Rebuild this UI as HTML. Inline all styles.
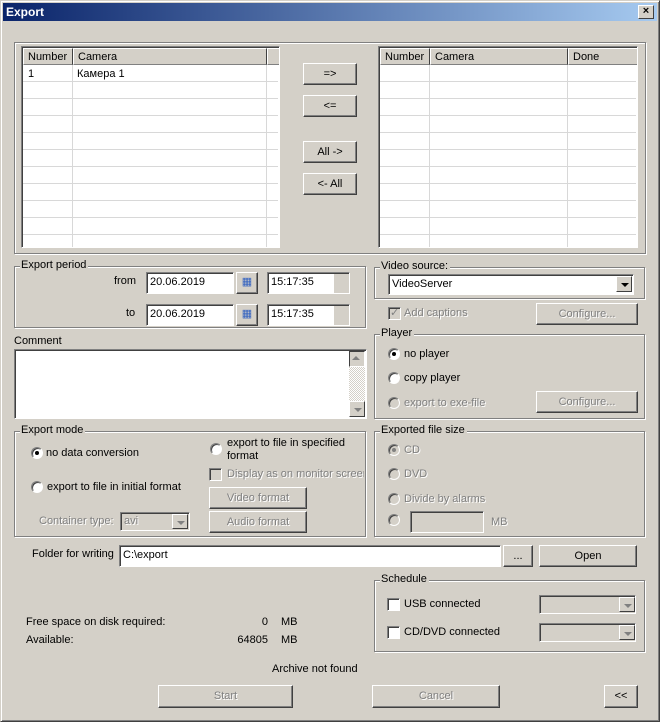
<!DOCTYPE html><html><head><meta charset="utf-8"><style>
*{box-sizing:border-box}
body{margin:0;width:660px;height:722px;background:#d4d0c8;font:11px "Liberation Sans",sans-serif;color:#000;position:relative;overflow:hidden}
.a{position:absolute}
.win{position:absolute;left:0;top:0;width:660px;height:722px;border:1px solid;border-color:#d4d0c8 #404040 #404040 #d4d0c8;box-shadow:inset 1px 1px #fff,inset -1px -1px #808080}
.title{left:3px;top:3px;width:654px;height:18px;background:linear-gradient(90deg,#0a246a,#a6caf0);color:#fff;font-weight:bold;font-size:12px;padding:2px 3px}
.close{left:638px;top:5px;width:16px;height:14px;background:#d4d0c8;border:1px solid;border-color:#fff #404040 #404040 #fff;text-align:center;font-size:11px;line-height:11px;font-weight:bold}
.grp{position:absolute;border:1px solid #808080;box-shadow:1px 1px #fff,inset 1px 1px #fff}
.grp>.l{position:absolute;left:5px;top:-8px;background:#d4d0c8;padding:0 2px 0 1px}
.btn{position:absolute;background:#d4d0c8;border:1px solid;border-color:#fff #404040 #404040 #fff;box-shadow:inset -1px -1px #808080;text-align:center;line-height:20px}
.dis{color:#808080;text-shadow:1px 1px #fff}
.ed{position:absolute;background:#fff;border:1px solid;border-color:#808080 #fff #fff #808080;box-shadow:inset 1px 1px #404040;padding:3px 3px 0}
.edg{background:#d4d0c8}
.rd{position:absolute;width:12px;height:12px;border-radius:50%;background:#fff;border:1px solid;border-color:#808080 #fff #fff #808080;box-shadow:inset 1px 1px #404040}
.rd.on::after{content:"";position:absolute;left:3px;top:3px;width:4px;height:4px;border-radius:50%;background:#000}
.rd.g{background:#d4d0c8}
.rd.g.on::after{background:#808080}
.cb{position:absolute;width:13px;height:13px;background:#fff;border:1px solid;border-color:#808080 #fff #fff #808080;box-shadow:inset 1px 1px #404040}
.cb.g{background:#d4d0c8}
.dd{position:absolute;width:16px;height:16px;background:#d4d0c8;border:1px solid;border-color:#fff #404040 #404040 #fff}
.dd::after{content:"";position:absolute;left:4px;top:6px;border:4px solid transparent;border-top:4px solid #000;border-bottom:0}
.dd.g::after{border-top-color:#808080}
.list{position:absolute;background:#fff;border:1px solid;border-color:#808080 #fff #fff #808080;box-shadow:inset 1px 1px #404040;overflow:hidden}
.hd{position:absolute;top:1px;height:17px;background:#d4d0c8;border:1px solid;border-color:#fff #404040 #808080 #fff;padding:2px 4px}
.rows{position:absolute;top:18px;bottom:0;left:1px;right:1px;background:repeating-linear-gradient(180deg,transparent 0 16px,#d8d8d8 16px 17px)}
.vl{position:absolute;top:18px;bottom:0;width:1px;background:#d8d8d8}
</style></head><body>
<div class="win"></div>
<div class="a title">Export</div>
<div class="a close">×</div>

<div class="grp" style="left:14px;top:42px;width:632px;height:212px"></div>
<div class="list" style="left:21px;top:46px;width:259px;height:202px">
<div class="rows"></div><div class="vl" style="left:50px"></div><div class="vl" style="left:244px"></div>
<div class="hd" style="left:1px;width:50px">Number</div><div class="hd" style="left:51px;width:194px">Camera</div><div class="hd" style="left:245px;width:14px"></div>
<div class="a" style="left:6px;top:21px">1</div><div class="a" style="left:55px;top:21px">Камера 1</div>
</div>
<div class="list" style="left:378px;top:46px;width:260px;height:202px">
<div class="rows"></div><div class="vl" style="left:50px"></div><div class="vl" style="left:188px"></div>
<div class="hd" style="left:1px;width:50px">Number</div><div class="hd" style="left:51px;width:138px">Camera</div><div class="hd" style="left:189px;width:70px">Done</div>
</div>
<div class="btn" style="left:303px;top:63px;width:54px;height:22px">=&gt;</div>
<div class="btn" style="left:303px;top:95px;width:54px;height:22px">&lt;=</div>
<div class="btn" style="left:303px;top:141px;width:54px;height:22px">All -&gt;</div>
<div class="btn" style="left:303px;top:173px;width:54px;height:22px">&lt;- All</div>

<div class="grp" style="left:14px;top:266px;width:352px;height:62px"><span class="l">Export period</span></div>
<div class="a" style="left:114px;top:275px">from</div>
<div class="ed" style="left:146px;top:272px;width:88px;height:22px">20.06.2019</div>
<div class="btn" style="left:236px;top:272px;width:22px;height:22px;line-height:18px;color:#3060c0">▦</div>
<div class="ed" style="left:267px;top:272px;width:83px;height:22px;background:linear-gradient(90deg,#fff 66px,#d4d0c8 66px)">15:17:35</div>
<div class="a" style="left:126px;top:307px">to</div>
<div class="ed" style="left:146px;top:304px;width:88px;height:22px">20.06.2019</div>
<div class="btn" style="left:236px;top:304px;width:22px;height:22px;line-height:18px;color:#3060c0">▦</div>
<div class="ed" style="left:267px;top:304px;width:83px;height:22px;background:linear-gradient(90deg,#fff 66px,#d4d0c8 66px)">15:17:35</div>

<div class="a" style="left:14px;top:335px">Comment</div>
<div class="ed" style="left:14px;top:349px;width:353px;height:70px"></div>
<div class="a" style="left:349px;top:351px;width:16px;height:66px;background:repeating-conic-gradient(#fff 0 25%,#d4d0c8 0 50%) 0 0/2px 2px"></div>
<div class="dd g" style="left:349px;top:351px;transform:rotate(180deg)"></div>
<div class="dd g" style="left:349px;top:401px"></div>

<div class="grp" style="left:374px;top:267px;width:271px;height:32px"><span class="l">Video source:</span></div>
<div class="ed" style="left:388px;top:274px;width:246px;height:21px;padding-top:3px">VideoServer</div>
<div class="dd" style="left:616px;top:276px"></div>
<div class="cb g" style="left:388px;top:307px"></div><div class="a" style="left:390px;top:306px;color:#808080;font-size:11px">✓</div>
<div class="a dis" style="left:404px;top:307px">Add captions</div>
<div class="btn dis" style="left:536px;top:303px;width:102px;height:22px">Configure...</div>

<div class="grp" style="left:374px;top:334px;width:271px;height:85px"><span class="l">Player</span></div>
<div class="rd on" style="left:388px;top:348px"></div><div class="a" style="left:404px;top:348px">no player</div>
<div class="rd" style="left:388px;top:372px"></div><div class="a" style="left:404px;top:372px">copy player</div>
<div class="rd g" style="left:388px;top:397px"></div><div class="a dis" style="left:404px;top:397px">export to exe-file</div>
<div class="btn dis" style="left:536px;top:391px;width:102px;height:22px">Configure...</div>

<div class="grp" style="left:374px;top:431px;width:271px;height:106px"><span class="l">Exported file size</span></div>
<div class="rd g on" style="left:388px;top:444px"></div><div class="a dis" style="left:404px;top:444px">CD</div>
<div class="rd g" style="left:388px;top:468px"></div><div class="a dis" style="left:404px;top:468px">DVD</div>
<div class="rd g" style="left:388px;top:493px"></div><div class="a dis" style="left:404px;top:493px">Divide by alarms</div>
<div class="rd g" style="left:388px;top:514px"></div>
<div class="ed edg" style="left:410px;top:511px;width:74px;height:22px"></div>
<div class="a dis" style="left:491px;top:516px">MB</div>

<div class="grp" style="left:14px;top:431px;width:352px;height:106px"><span class="l">Export mode</span></div>
<div class="rd on" style="left:31px;top:447px"></div><div class="a" style="left:46px;top:447px">no data conversion</div>
<div class="rd" style="left:31px;top:481px"></div><div class="a" style="left:47px;top:481px">export to file in initial format</div>
<div class="rd" style="left:210px;top:443px"></div><div class="a" style="left:227px;top:437px;line-height:13px">export to file in specified<br>format</div>
<div class="cb g" style="left:209px;top:468px"></div><div class="a dis" style="left:227px;top:468px;width:137px;white-space:nowrap;overflow:hidden">Display as on monitor screen</div>
<div class="btn dis" style="left:209px;top:487px;width:98px;height:22px">Video format</div>
<div class="btn dis" style="left:209px;top:511px;width:98px;height:22px">Audio format</div>
<div class="a dis" style="left:39px;top:515px">Container type:</div>
<div class="ed edg dis" style="left:120px;top:512px;width:70px;height:19px;padding-top:2px">avi</div>
<div class="dd g" style="left:172px;top:514px;width:16px;height:15px"></div>

<div class="a" style="left:32px;top:548px">Folder for writing</div>
<div class="ed" style="left:119px;top:545px;width:382px;height:22px">C:\export</div>
<div class="btn" style="left:503px;top:545px;width:30px;height:22px">...</div>
<div class="btn" style="left:539px;top:545px;width:98px;height:22px">Open</div>

<div class="grp" style="left:374px;top:580px;width:271px;height:72px"><span class="l">Schedule</span></div>
<div class="cb" style="left:387px;top:598px"></div><div class="a" style="left:404px;top:598px">USB connected</div>
<div class="ed edg" style="left:539px;top:595px;width:97px;height:19px"></div><div class="dd g" style="left:619px;top:597px;height:15px"></div>
<div class="cb" style="left:387px;top:626px"></div><div class="a" style="left:404px;top:626px">CD/DVD connected</div>
<div class="ed edg" style="left:539px;top:623px;width:97px;height:19px"></div><div class="dd g" style="left:619px;top:625px;height:15px"></div>

<div class="a" style="left:26px;top:616px">Free space on disk required:</div>
<div class="a" style="left:200px;top:616px;width:68px;text-align:right">0</div><div class="a" style="left:281px;top:616px">MB</div>
<div class="a" style="left:26px;top:634px">Available:</div>
<div class="a" style="left:200px;top:634px;width:68px;text-align:right">64805</div><div class="a" style="left:281px;top:634px">MB</div>
<div class="a" style="left:272px;top:663px">Archive not found</div>

<div class="btn dis" style="left:158px;top:685px;width:135px;height:23px">Start</div>
<div class="btn dis" style="left:372px;top:685px;width:128px;height:23px">Cancel</div>
<div class="btn" style="left:604px;top:685px;width:34px;height:23px">&lt;&lt;</div>
</body></html>
